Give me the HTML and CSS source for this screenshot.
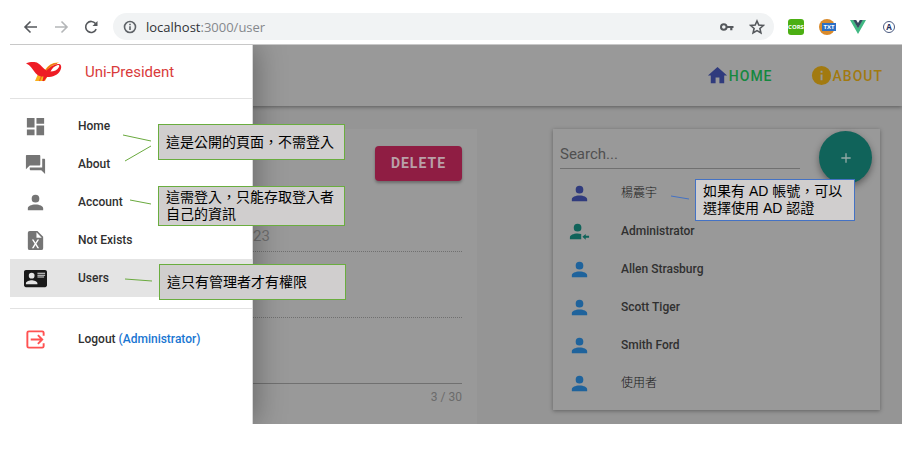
FILE: index.html
```html
<!DOCTYPE html>
<html lang="zh-Hant">
<head>
<meta charset="utf-8">
<title>Users</title>
<link rel="stylesheet" href="styles.css">
</head>
<body>
<svg class="defs" aria-hidden="true">
  <symbol id="person" viewBox="0 0 24 24"><path d="M12 4a4 4 0 1 1 0 8 4 4 0 0 1 0-8M12 14c4.420 0 8 1.790 8 4v2H4v-2c0-2.210 3.580-4 8-4z"/></symbol>
  <symbol id="person-arrow" viewBox="0 0 24 24"><path d="M10 4a4 4 0 1 1 0 8 4 4 0 0 1 0-8M10 14c1.500 0 2.700.2 3.800.500V20H2v-2c0-2.210 3.580-4 8-4zM15 17.500l3.500-3v2H22v2h-3.500v2z"/></symbol>
</svg>
<div class="browser">
  <div class="toolbar">
    <button class="tool" aria-label="Back"><svg viewBox="0 0 16 16"><path d="M14 8H2.500M7.500 2.500L2 8l5.500 5.500"/></svg></button>
    <button class="tool faint" aria-label="Forward"><svg viewBox="0 0 16 16"><path d="M2 8h11.500M8.500 2.500L14 8l-5.500 5.500"/></svg></button>
    <button class="tool" aria-label="Reload"><svg viewBox="0 0 16 16"><path d="M13.200 10.200A5.500 5.500 0 1 1 12.500 4.500"/><path d="M14.500 2v5h-5z" fill="currentColor" stroke="none"/></svg></button>
    <div class="address">
      <svg class="info" viewBox="0 0 16 16"><circle cx="8" cy="8" r="5.500"/><path d="M8 7.300v3.700M8 4.800v1.500"/></svg>
      <span class="url"><b>localhost</b>:3000/user</span>
      <button class="tool" aria-label="Saved passwords"><svg viewBox="0 0 16 16"><circle cx="4.800" cy="8" r="2.800" stroke-width="2"/><path d="M8 8h6.500M12.300 8v3.200" stroke-width="2.200"/></svg></button>
      <button class="tool" aria-label="Bookmark"><svg viewBox="0 0 16 16"><path d="M8 2l1.800 4.100 4.500.4-3.400 3 1 4.400L8 11.600l-3.900 2.300 1-4.400-3.400-3 4.500-.4z"/></svg></button>
    </div>
    <div class="extensions">
      <span class="cors">CORS</span>
      <span class="cookie"><span class="txt">TXT</span></span>
      <svg viewBox="0 0 16 16"><path d="M0 1h3.500L8 8.800 12.500 1H16L8 15z" fill="#41b883"/><path d="M3.200 1h3L8 4l1.800-3h3L8 9.300z" fill="#35495e"/></svg>
      <span class="apollo">A</span>
    </div>
  </div>

  <div class="viewport">
    <header class="appbar">
      <nav>
        <a class="home" href="#home"><svg viewBox="0 0 24 24"><path d="M10 20v-6h4v6h5v-8h3L12 3 2 12h3v8z"/></svg>HOME</a>
        <a class="about" href="#about"><svg viewBox="0 0 24 24"><path fill-rule="evenodd" d="M12 2a10 10 0 1 0 0 20 10 10 0 0 0 0-20zM11 7h2v2h-2zM11 11h2v6h-2z"/></svg>ABOUT</a>
      </nav>
    </header>
    <main class="content">
      <section class="card editor">
        <button class="delete">DELETE</button>
        <input class="field dotted first" aria-label="Account" value="23" readonly>
        <input class="field dotted" aria-label="Role" readonly>
        <input class="field" aria-label="Name">
        <span class="counter">3 / 30</span>
      </section>
      <section class="card users">
        <input class="search" aria-label="Search" placeholder="Search...">
        <button class="add" aria-label="Add user"><svg viewBox="0 0 24 24"><path d="M19 13h-6v6h-2v-6H5v-2h6V5h2v6h6z"/></svg></button>
        <ul>
          <li class="cjk"><svg class="indigo"><use href="#person"/></svg>楊震宇</li>
          <li><svg class="teal"><use href="#person-arrow"/></svg>Administrator</li>
          <li><svg><use href="#person"/></svg>Allen Strasburg</li>
          <li><svg><use href="#person"/></svg>Scott Tiger</li>
          <li><svg><use href="#person"/></svg>Smith Ford</li>
          <li class="cjk"><svg><use href="#person"/></svg>使用者</li>
        </ul>
      </section>
    </main>

    <aside class="drawer">
      <div class="brand">
        <svg viewBox="0 0 36 20">
          <path d="M19 8C22 3 27 0 33 .5l-6 3-6 7z" fill="#f9b21c"/>
          <path d="M12 12l-3 7h10l3-6z" fill="#f9b21c"/>
          <path d="M20.500 8C23 4 27 1.500 31 1.500M13.500 19l2-5M17 19l2-5" fill="none" stroke="#ee6a20" stroke-width="1.200"/>
          <path fill-rule="evenodd" d="M0 1.500C4-.2 9-.4 12 1.200c3 1.800 5 5.300 8.500 7.300C24 5 29 1.500 33 2c3 .5 2.500 4.500 1 7-2.500 4-7 6-13 6l-3 4h-1.500l1-4.500c-3 0-5-.5-6.500-2C7 9 6 4 0 1.500zM24.500 9.500c3.500 0 7-1.500 8.500-4.500.7-1.700-.2-2.200-1.700-1.800-3 .8-5.300 3.300-6.800 6.300z" fill="#ee1c25"/>
        </svg>
        <span>Uni-President</span>
      </div>
      <nav>
        <a href="#home"><svg viewBox="0 0 24 24"><path d="M3 13h8V3H3zM3 21h8v-6H3zM13 21h8V11h-8zM13 3v6h8V3z"/></svg>Home</a>
        <a href="#about"><svg viewBox="0 0 24 24"><path d="M21 6h-2v9H6v2c0 .55.45 1 1 1h11l4 4V7c0-.55-.45-1-1-1zm-4 6V3c0-.55-.45-1-1-1H3c-.55 0-1 .45-1 1v14l4-4h10c.55 0 1-.45 1-1z"/></svg>About</a>
        <a href="#account"><svg><use href="#person"/></svg>Account</a>
        <a href="#missing"><svg viewBox="0 0 24 24"><path d="M14 2H6a2 2 0 0 0-2 2v16a2 2 0 0 0 2 2h12a2 2 0 0 0 2-2V8l-6-6m1.800 18H14l-2-3.400L10 20H8.200l2.900-4.500L8.200 11H10l2 3.400 2-3.400h1.800l-2.900 4.500 2.900 4.500M13 9V3.500L18.500 9H13z"/></svg>Not Exists</a>
        <a class="active" href="#users"><svg viewBox="0 0 24 24"><path d="M2 3h20c1.050 0 2 .95 2 2v14c0 1.050-.95 2-2 2H2c-1.050 0-2-.95-2-2V5c0-1.050.95-2 2-2m12 3v1h8V6h-8m0 2v1h8V8h-8m0 2v1h7v-1h-7m-6 3.910C6 13.910 2 15 2 17v1h12v-1c0-2-4-3.090-6-3.090M8 6a3 3 0 0 0-3 3 3 3 0 0 0 3 3 3 3 0 0 0 3-3 3 3 0 0 0-3-3z"/></svg>Users</a>
      </nav>
      <nav class="session">
        <a href="#logout"><svg class="exit" viewBox="0 0 24 24"><path d="M20.500 8V5a1.500 1.500 0 0 0-1.500-1.500H5A1.500 1.500 0 0 0 3.500 5v14A1.500 1.500 0 0 0 5 20.500h14a1.500 1.500 0 0 0 1.500-1.500v-3M7 12h12M14.500 7.500L19 12l-4.500 4.500"/></svg><span>Logout <em>(Administrator)</em></span></a>
      </nav>
    </aside>

    <svg class="leaders" aria-hidden="true">
      <path d="M113 90l28 6M115 116l26-15M120 155l21 4M115 234l27 2"/>
      <path class="blue" d="M661 151l18 3"/>
    </svg>
    <p class="note public">這是公開的頁面，不需登入</p>
    <p class="note own">這需登入，只能存取登入者自己的資訊</p>
    <p class="note admin">這只有管理者才有權限</p>
    <p class="note auth">如果有 AD 帳號，可以選擇使用 AD 認證</p>
  </div>
</div>
</body>
</html>
```
FILE: styles.css
```css
* { box-sizing: border-box; }

body {
  margin: 0;
  background: #fff;
  font: 500 12px/16px Roboto, "Noto Sans CJK TC", sans-serif;
  color: #303030;
}

button { border: 0; padding: 0; background: none; font: inherit; color: inherit; }
a { color: inherit; text-decoration: none; }
svg { display: block; flex: none; fill: currentColor; }
.defs { display: none; }

.browser { padding: 13px 22px 27px 10px; }

/* Browser bar */
.toolbar {
  display: flex;
  gap: 14px;
  padding: 0 5px 4px 13px;
  align-items: center;
  border-bottom: 1px solid #c8c8c8;
}
.tool { color: #55585c; }
.tool svg, .info { width: 16px; height: 16px; fill: none; stroke: currentColor; stroke-width: 1.6; }
.faint { color: #b4b6b8; }
.address {
  flex: 1;
  display: flex;
  align-items: center;
  gap: 14px;
  height: 27px;
  padding: 0 9px;
  border-radius: 14px;
  background: #f1f3f4;
}
.info { color: #5f6368; }
.url {
  flex: 1;
  margin-left: -6px;
  font: 400 13px/20px "Open Sans", sans-serif;
  color: #85888c;
}
.url b { font-weight: 400; color: #303236; }
.extensions { display: flex; align-items: center; gap: 15px; }
.extensions > * { width: 16px; height: 16px; }
.cors {
  border-radius: 3px;
  background: #4caf13;
  color: #fff;
  font: 700 6px/16px "Open Sans", sans-serif;
  text-align: center;
}
.cookie { display: flex; align-items: center; border-radius: 50%; background: #d98a2b; }
.txt {
  flex: none;
  width: 14px;
  margin-left: 3px;
  background: #2c6fc4;
  color: #fff;
  font: 700 6px/8px "Open Sans", sans-serif;
  text-align: center;
}
.extensions .apollo {
  width: 12px;
  height: 12px;
  margin: 0 2px;
  border: 1px solid #4a5a80;
  border-radius: 50%;
  color: #1f2f5c;
  font: 700 8px/10px "Open Sans", sans-serif;
  text-align: center;
}

/* Page */
.viewport { position: relative; overflow: hidden; background: #959595; }
.appbar {
  position: relative;
  display: flex;
  justify-content: flex-end;
  align-items: center;
  height: 61px;
  padding: 0 19px;
  background: #999;
  box-shadow: 0 1px 4px rgba(0, 0, 0, 0.4);
}
.appbar nav { display: flex; gap: 37px; }
.appbar a { display: flex; align-items: center; font-size: 14px; letter-spacing: 1px; }
.appbar svg { width: 23px; height: 23px; }
.home { color: #15883f; }
.home svg { color: #303b7d; }
.about { color: #a27a10; }

.content {
  display: grid;
  grid-template-columns: minmax(0, 1fr) 327px;
  gap: 76px;
  padding: 23px 22px 14px;
}
.card { background: #999; }

.editor {
  display: flex;
  flex-direction: column;
  padding: 17px 15px 0 221px;
  margin-bottom: -14px;
}
.delete {
  align-self: flex-end;
  padding: 0 16px;
  border-radius: 4px;
  background: #8f1d43;
  color: #b9a0a8;
  font-size: 14px;
  font-weight: 700;
  line-height: 35px;
  letter-spacing: 1px;
  box-shadow: 0 2px 3px rgba(0, 0, 0, 0.3);
}
.field, .search {
  border: 0;
  border-bottom: 1px solid #707070;
  border-radius: 0;
  padding: 0;
  background: none;
  font: 400 15px/20px Roboto, "Noto Sans CJK TC", sans-serif;
  color: #707070;
  outline: 0;
}
.field { width: 100%; height: 32px; margin-top: 34px; }
.dotted { border-bottom-style: dotted; }
.field.first { margin-top: 39px; }
.counter { align-self: flex-end; margin-top: 5px; color: #6b6b6b; font-weight: 400; }

.users { position: relative; padding: 10px 7px 8px; box-shadow: 0 1px 4px rgba(0, 0, 0, 0.35); }
.search { width: 240px; height: 30px; color: #4c4c4c; }
.search::placeholder { color: #505050; opacity: 1; }
.add {
  position: absolute;
  top: 2px;
  right: 8px;
  display: grid;
  place-items: center;
  width: 53px;
  height: 53px;
  border-radius: 50%;
  background: #10635a;
  color: #94aaa6;
  box-shadow: 0 3px 7px rgba(0, 0, 0, 0.4);
}
.add svg { width: 16px; height: 16px; }
.users ul { margin: 5px 0 0; padding: 0; list-style: none; }
.users li { display: flex; align-items: center; gap: 30px; height: 38px; padding-left: 8px; }
.users .cjk { font-weight: 300; color: #181818; }
.users li svg { width: 23px; height: 23px; color: #1f639c; }
.users li .indigo { color: #303b7d; }
.users li .teal { color: #10635a; }

/* Navigation drawer */
.drawer {
  position: absolute;
  top: 0;
  bottom: 0;
  left: 0;
  width: 243px;
  background: #fff;
  border-right: 1px solid #d8d8d8;
  box-shadow: 2px 0 28px rgba(0, 0, 0, 0.35);
}
.brand {
  display: flex;
  align-items: center;
  gap: 23px;
  height: 54px;
  padding-left: 16px;
  border-bottom: 1px solid #e2e2e2;
  color: #d93b3b;
  font-size: 15px;
  font-weight: 400;
}
.brand svg { width: 36px; height: 20px; }
.drawer nav { padding: 8px 0 11px; }
.drawer a { display: flex; align-items: center; gap: 31px; height: 38px; padding-left: 14px; }
.drawer a svg { width: 23px; height: 23px; color: #757575; }
.drawer .active { background: #e4e4e4; }
.drawer .active svg { color: #1a1a1a; }
.drawer .session { padding: 11px 0; border-top: 1px solid #e2e2e2; }
.drawer a .exit { fill: none; stroke: #ff5252; stroke-width: 2; }
em { font-style: normal; color: #1976d2; }

/* Callouts */
.leaders { position: absolute; top: 0; left: 0; width: 100%; height: 100%; fill: none; stroke: #6aaa3e; stroke-width: 1; }
.blue { stroke: #4472c4; }
.note {
  position: absolute;
  margin: 0;
  padding: 0 7px;
  width: 187px;
  border: 1px solid #6aad3f;
  background: #d0cece;
  color: #000;
  font: 400 14px/17px "Liberation Sans", "Noto Sans CJK TC", sans-serif;
}
.public { top: 79px; left: 148px; line-height: 34px; }
.own { top: 141px; left: 148px; padding-top: 2px; padding-bottom: 2px; }
.admin { top: 219px; left: 149px; line-height: 34px; }
.auth { top: 134px; left: 685px; width: 160px; padding-top: 3px; padding-bottom: 3px; border-color: #4472c4; }
```
